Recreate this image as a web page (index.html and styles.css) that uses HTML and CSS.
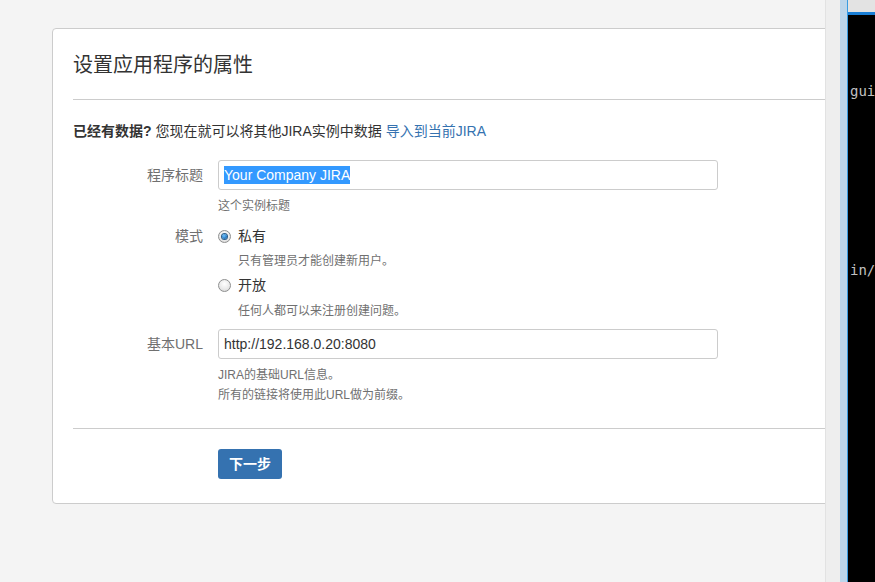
FILE: index.html
```html
<!DOCTYPE html>
<html lang="zh">
<head>
<meta charset="utf-8">
<title>设置应用程序的属性</title>
<link rel="stylesheet" href="styles.css">
</head>
<body>
<div class="screen">
  <div class="main">
    <div class="card">
      <div class="card-head"><h1 class="title">设置应用程序的属性</h1></div>
      <p class="intro"><strong>已经有数据?</strong> 您现在就可以将其他JIRA实例中数据 <a class="link" href="#">导入到当前JIRA</a></p>
      <div class="row row-title">
        <div class="label">程序标题</div>
        <div class="field">
          <div class="input"><span class="sel">Your Company JIRA</span></div>
          <div class="desc">这个实例标题</div>
        </div>
      </div>
      <div class="row row-mode">
        <div class="label">模式</div>
        <div class="field">
          <div class="radio-line"><span class="radio checked"></span><span class="radio-text">私有</span></div>
          <div class="desc radio-desc">只有管理员才能创建新用户。</div>
          <div class="radio-line second"><span class="radio"></span><span class="radio-text">开放</span></div>
          <div class="desc radio-desc last">任何人都可以来注册创建问题。</div>
        </div>
      </div>
      <div class="row row-url">
        <div class="label">基本URL</div>
        <div class="field">
          <div class="input">http://192.168.0.20:8080</div>
          <div class="desc">JIRA的基础URL信息。<br>所有的链接将使用此URL做为前缀。</div>
        </div>
      </div>
      <div class="card-foot">
        <button class="btn" type="button">下一步</button>
      </div>
    </div>
  </div>
  <div class="scroll-strip"></div>
  <div class="side-strip"></div>
  <div class="terminal">
    <div class="term-top"></div>
    <div class="term-bar"></div>
    <div class="term-body">
      <div class="term-line first">gui</div>
      <div class="term-line second">in/</div>
    </div>
  </div>
</div>
</body>
</html>
```

FILE: styles.css
```css
* { box-sizing: border-box; }
html, body { margin: 0; padding: 0; }
body {
  background: #f4f4f4;
  font-family: "Liberation Sans", "Noto Sans CJK SC", Arial, sans-serif;
  color: #333;
  width: 875px;
  height: 582px;
  overflow: hidden;
}
.screen {
  display: flex;
  width: 875px;
  height: 582px;
}
.main {
  width: 825px;
  flex: none;
  height: 582px;
  overflow: hidden;
  padding: 28px 0 0 52px;
  background: #f4f4f4;
}
.card {
  width: 820px;
  height: 476px;
  background: #fff;
  border: 1px solid #cccccc;
  border-radius: 4px;
  padding: 0 20px;
}
.card-head {
  padding: 21px 0 19px;
  border-bottom: 1px solid #cccccc;
}
.title {
  margin: 0;
  font-size: 20px;
  line-height: 30px;
  font-weight: normal;
  color: #333;
}
.intro {
  margin: 21px 0 0;
  font-size: 14px;
  line-height: 20px;
  color: #333;
}
.intro strong { font-weight: bold; }
.link { color: #3572b0; text-decoration: none; }
.row {
  display: flex;
  gap: 15px;
}
.label {
  width: 130px;
  flex: none;
  text-align: right;
  font-size: 14px;
  color: #707070;
}
.row-title { margin-top: 19px; }
.row-title .label, .row-url .label { line-height: 30px; }
.row-mode { margin-top: 10px; }
.row-mode .label { line-height: 20px; }
.row-url { margin-top: 8px; }
.field { display: flex; flex-direction: column; }
.input {
  width: 500px;
  height: 30px;
  border: 1px solid #cccccc;
  border-radius: 3px;
  padding: 0 5px;
  font-size: 14px;
  line-height: 28px;
  color: #333;
  background: #fff;
}
.sel {
  background: #3399ff;
  color: #fff;
  padding: 1px 0;
}
.desc {
  margin-top: 6px;
  font-size: 12px;
  line-height: 20px;
  color: #707070;
}
.radio-line {
  display: flex;
  align-items: center;
  gap: 7px;
  height: 20px;
  font-size: 14px;
  color: #333;
}
.radio-line.second { margin-top: 4px; }
.radio-desc { margin-top: 5px; padding-left: 20px; }
.radio-desc.last { margin-top: 6px; }
.radio {
  width: 13px;
  height: 13px;
  border-radius: 50%;
  border: 1px solid #8e8f8f;
  background: radial-gradient(circle at 50% 35%, #ffffff 0%, #e8e8e8 60%, #cfcfcf 100%);
  display: flex;
  align-items: center;
  justify-content: center;
  flex: none;
}
.radio.checked::after {
  content: "";
  width: 5px;
  height: 5px;
  border-radius: 50%;
  background: radial-gradient(circle at 40% 35%, #6fc3ff 0%, #1d6fb8 70%, #0b3c6e 100%);
  box-shadow: 0 0 0 1px #2a5d8a;
}
.radio-text { line-height: 20px; }
.card-foot {
  margin-top: 23px;
  border-top: 1px solid #cccccc;
  padding: 20px 0 0 145px;
}
.btn {
  height: 30px;
  padding: 0 11px;
  border: none;
  border-radius: 3px;
  background: #3572b0;
  color: #fff;
  font-family: "Liberation Sans", "Noto Sans CJK SC", Arial, sans-serif;
  font-size: 14px;
  font-weight: bold;
  line-height: 30px;
}
.scroll-strip {
  width: 15px;
  flex: none;
  background: #eeeeee;
  border-left: 1px solid #e2e2e2;
}
.side-strip {
  width: 8px;
  flex: none;
  background: #bcd5ea;
  border-right: 1px solid #3a9be0;
}
.terminal {
  flex: 1;
  display: flex;
  flex-direction: column;
  background: #000;
}
.term-top { height: 12px; background: #e3e3e3; }
.term-bar { height: 3px; background: #1a7fd6; }
.term-body {
  padding-left: 2px;
  font-family: "DejaVu Sans Mono", "Liberation Mono", monospace;
  font-size: 14px;
  line-height: 18px;
  color: #c0c0c0;
  white-space: nowrap;
  overflow: hidden;
}
.term-line.first { margin-top: 67px; }
.term-line.second { margin-top: 161px; }
```
